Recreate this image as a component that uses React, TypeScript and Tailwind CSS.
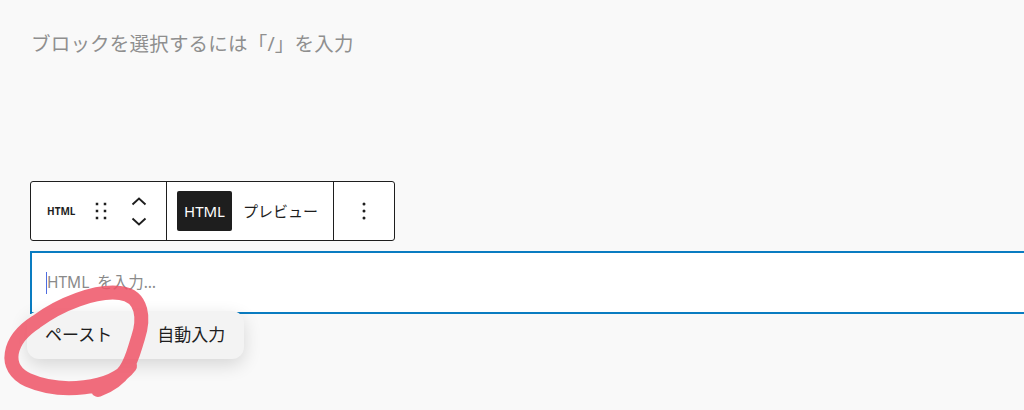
import React from 'react';

const font = { fontFamily: '"Noto Sans", "Noto Sans CJK JP", sans-serif' };

function DragDots() {
  return (
    <svg width="12" height="20" viewBox="0 0 12 20" className="text-[#1e1e1e]">
      {[3, 10, 17].map((y) =>
        [2, 10].map((x) => <rect key={`${x}-${y}`} x={x - 1.25} y={y - 1.25} width="2.5" height="2.5" fill="currentColor" />)
      )}
    </svg>
  );
}

function Movers() {
  return (
    <div className="flex flex-col items-center gap-[11px]">
      <svg width="16" height="9" viewBox="0 0 16 9" fill="none" stroke="#1e1e1e" strokeWidth="1.9">
        <path d="M1.5 7.5 L8 1.5 L14.5 7.5" />
      </svg>
      <svg width="16" height="9" viewBox="0 0 16 9" fill="none" stroke="#1e1e1e" strokeWidth="1.9">
        <path d="M1.5 1.5 L8 7.5 L14.5 1.5" />
      </svg>
    </div>
  );
}

function MoreVertical() {
  return (
    <svg width="4" height="20" viewBox="0 0 4 20">
      <circle cx="2" cy="3" r="1.5" fill="#1e1e1e" />
      <circle cx="2" cy="10" r="1.5" fill="#1e1e1e" />
      <circle cx="2" cy="17" r="1.5" fill="#1e1e1e" />
    </svg>
  );
}

export default function App() {
  return (
    <div className="relative w-[1024px] h-[410px] overflow-hidden bg-[#f9f9f9]" style={font}>
      <div className="pl-[31px] pt-[30px]">
        <p className="text-[19.5px] leading-[28px] text-[#8f8f8f] tracking-[0.2px]">ブロックを選択するには「/」を入力</p>

        <div className="mt-[123px] flex h-[60px] w-[365px] -ml-px rounded-[3px] border border-[#1e1e1e] bg-white">
          <div className="flex w-[135px] items-center pl-[16px]">
            <span className="text-[10px] font-bold text-[#1e1e1e]">HTML</span>
            <div className="ml-[20px]">
              <DragDots />
            </div>
            <div className="ml-[24px]">
              <Movers />
            </div>
          </div>
          <div className="flex w-[167px] items-center border-l border-[#1e1e1e] pl-[10px]">
            <span className="flex h-[40px] w-[55px] items-center justify-center rounded-[2px] bg-[#1e1e1e] text-[15px] text-white">HTML</span>
            <span className="ml-[11px] text-[15px] text-[#1e1e1e]">プレビュー</span>
          </div>
          <div className="flex flex-1 items-center justify-center border-l border-[#1e1e1e]">
            <MoreVertical />
          </div>
        </div>

        <div className="mt-[10px] -ml-px flex h-[63px] w-[1100px] items-center border-2 border-[#0a7cc1] bg-white pl-[14px]">
          <span className="h-[22px] w-px bg-[#4f6de0]" />
          <span className="whitespace-pre text-[15.5px] text-[#8a8a8a]">HTML  を入力…</span>
        </div>
      </div>

      <div className="absolute left-[27px] top-[311px] flex h-[48px] items-center gap-[8px] rounded-[12px] bg-[#f3f3f3] shadow-[0_6px_18px_rgba(0,0,0,0.14)]">
        <span className="px-[18px] text-[17px] font-normal text-[#1e1e1e]">ペースト</span>
        <span className="px-[19px] text-[17px] font-normal text-[#1e1e1e]">自動入力</span>
      </div>

      <svg className="pointer-events-none absolute inset-0" width="1024" height="410" viewBox="0 0 1024 410" fill="none">
        <path
          d="M 130 366 C 112 390, 60 394, 28 380 C 2 368, 8 340, 36 322 C 60 304, 96 290, 120 293 C 144 296, 144 320, 138 338 C 132 356, 130 378, 98 390"
          stroke="#ee5366"
          strokeOpacity="0.85"
          strokeWidth="14"
          strokeLinecap="round"
          strokeLinejoin="round"
        />
      </svg>
    </div>
  );
}
